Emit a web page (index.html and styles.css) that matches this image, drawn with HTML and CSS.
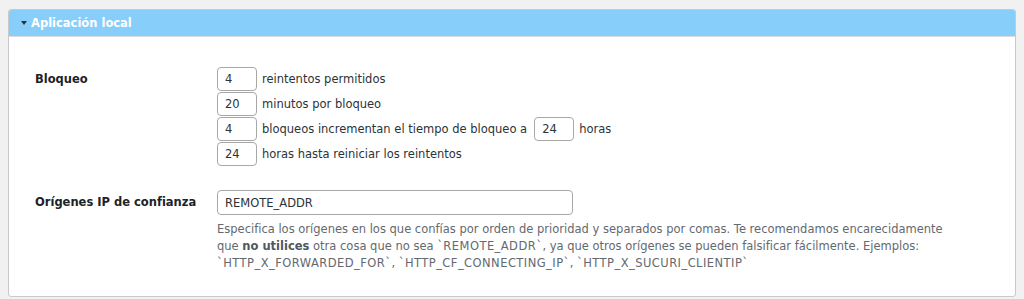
FILE: index.html
```html
<!DOCTYPE html>
<html lang="es">
<head>
<meta charset="utf-8">
<title>Aplicación local</title>
<link rel="stylesheet" href="styles.css">
</head>
<body>
<div class="panel">
  <div class="panel-head">
    <span class="caret"></span>
    <span class="panel-title">Aplicación local</span>
  </div>
  <div class="panel-body">
    <div class="field">
      <div class="label">Bloqueo</div>
      <div class="controls">
        <div class="line"><input class="num" type="text" value="4"><span>reintentos permitidos</span></div>
        <div class="line"><input class="num" type="text" value="20"><span>minutos por bloqueo</span></div>
        <div class="line"><input class="num" type="text" value="4"><span>bloqueos incrementan el tiempo de bloqueo a</span><input class="num" type="text" value="24"><span>horas</span></div>
        <div class="line"><input class="num" type="text" value="24"><span>horas hasta reiniciar los reintentos</span></div>
      </div>
    </div>
    <div class="field field-ip">
      <div class="label">Orígenes IP de confianza</div>
      <div class="controls">
        <input class="wide" type="text" value="REMOTE_ADDR">
        <p class="help">Especifica los orígenes en los que confías por orden de prioridad y separados por comas. Te recomendamos encarecidamente que <strong>no utilices</strong> otra cosa que no sea <span class="tok">`REMOTE_ADDR`</span>, ya que otros orígenes se pueden falsificar fácilmente. Ejemplos: <span class="tok">`HTTP_X_FORWARDED_FOR`</span>, <span class="tok">`HTTP_CF_CONNECTING_IP`</span>, <span class="tok">`HTTP_X_SUCURI_CLIENTIP`</span></p>
      </div>
    </div>
  </div>
</div>
</body>
</html>
```

FILE: styles.css
```css
html, body {
  margin: 0;
  padding: 0;
}
body {
  background: #f1f1f1;
  padding: 9px 8px 0 8px;
  font-family: "DejaVu Sans", Verdana, sans-serif;
  font-size: 11.5px;
  color: #1d2327;
}
.panel {
  background: #fff;
  border: 1px solid #c9c9c9;
  border-radius: 3px;
  overflow: hidden;
}
.panel-head {
  height: 26px;
  background: #87cefa;
  border-bottom: 1px solid #dcdcdc;
  display: flex;
  align-items: center;
  padding-left: 12px;
  gap: 4px;
}
.caret {
  width: 0;
  height: 0;
  border-left: 3px solid transparent;
  border-right: 3px solid transparent;
  border-top: 4px solid #2c3338;
}
.panel-title {
  color: #fff;
  font-weight: bold;
  font-size: 11.5px;
}
.panel-body {
  padding: 30px 26px 24px 26px;
}
.field {
  display: grid;
  grid-template-columns: 182px 1fr;
}
.field-ip {
  margin-top: 24px;
}
.label {
  font-weight: bold;
  color: #1d2327;
  line-height: 24px;
}
.field-ip .label {
  line-height: 25px;
}
.controls {
  display: flex;
  flex-direction: column;
  gap: 1px;
  align-items: flex-start;
}
.line {
  display: flex;
  align-items: center;
  gap: 5px;
  color: #2c3338;
}
.line span + input {
  margin-left: 2px;
}
input {
  font-family: "DejaVu Sans", Verdana, sans-serif;
  font-size: 11.5px;
  color: #2c3338;
  border: 1px solid #a7a7a7;
  border-radius: 4px;
  background: #fff;
  box-sizing: border-box;
  padding: 0 7px;
  margin: 0;
  outline: none;
}
.num {
  width: 40px;
  height: 24px;
}
.wide {
  width: 356px;
  height: 25px;
}
.help {
  margin: 5px 0 0 0;
  color: #646970;
  line-height: 17px;
  max-width: 740px;
}
.help strong {
  color: #50575e;
}
.tok {
  letter-spacing: 0.45px;
}
```
